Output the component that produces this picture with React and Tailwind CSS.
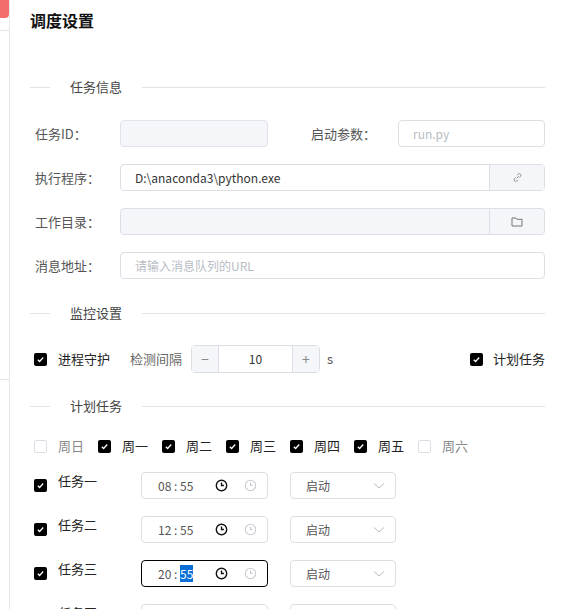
import React from "react";

const font = { fontFamily: '"Noto Sans CJK SC", "Liberation Sans", sans-serif' };

const Check = ({ on }) =>
  on ? (
    <span className="w-[13px] h-[13px] rounded-[2px] bg-black flex items-center justify-center shrink-0">
      <svg width="9" height="9" viewBox="0 0 10 10"><path d="M2 5.2l2 2 4-4.4" stroke="#fff" strokeWidth="1.4" fill="none" /></svg>
    </span>
  ) : (
    <span className="w-[13px] h-[13px] rounded-[2px] border border-[#dcdfe6] bg-white shrink-0" />
  );

const Divider = ({ title }) => (
  <div className="flex items-center h-[20px]">
    <div className="w-[20px] h-px bg-[#e1e3e8]" />
    <span className="px-5 text-[13px] text-[#444]">{title}</span>
    <div className="flex-1 h-px bg-[#e1e3e8]" />
  </div>
);

const Label = ({ children }) => <span className="w-[90px] pl-[5px] text-[13px] text-[#555] shrink-0">{children}</span>;

const Clock = ({ c, w }) => (
  <svg width="13" height="13" viewBox="0 0 14 14"><circle cx="7" cy="7" r="5.6" stroke={c} strokeWidth={w} fill="none" /><path d="M7 3.8V7h2.6" stroke={c} strokeWidth={w} fill="none" /></svg>
);

const Task = ({ name, time, focus }) => {
  const [h, m] = time.split(":");
  return (
    <div className="flex items-center h-[27px]">
      <span className="w-[28px] pl-[4px]"><Check on /></span>
      <span className="w-[83px] text-[13px] text-[#222] -mt-[10px]">{name}</span>
      <div className={`w-[127px] h-[27px] rounded flex items-center pl-[16px] pr-[10px] ${focus ? "border border-black" : "border border-[#dcdfe6]"}`}>
        <span className="text-[12px] text-[#555] flex-1">{h} : {focus ? <span className="bg-[#0a6fd6] text-white">{m}</span> : m}</span>
        <span className="mr-[16px]"><Clock c="#111" w="1.5" /></span>
        <Clock c="#c8cbd2" w="1.2" />
      </div>
      <div className="ml-[22px] w-[106px] h-[27px] rounded border border-[#dcdfe6] flex items-center pl-[15px] pr-[10px]">
        <span className="text-[12px] text-[#555] flex-1">启动</span>
        <svg width="12" height="8" viewBox="0 0 12 8"><path d="M1 1.5l5 4.5 5-4.5" stroke="#bbb" fill="none" /></svg>
      </div>
    </div>
  );
};

export default function App() {
  const days = [["周日", 0], ["周一", 1], ["周二", 1], ["周三", 1], ["周四", 1], ["周五", 1], ["周六", 0]];
  return (
    <div className="flex h-[609px] overflow-hidden bg-white" style={font}>
      <div className="w-[10px] border-r border-[#e5e6ea] shrink-0 flex flex-col">
        <div className="h-[18px] bg-[#f56c6c] rounded-br" />
        <div className="h-[12px]" />
        <div className="h-[350px] border-t border-b border-[#e5e6ea]" />
      </div>
      <div className="flex-1 pl-[20px] pr-[20px]">
        <h1 className="text-[16px] font-bold text-[#111] mt-[8px] h-[24px]">调度设置</h1>
        <div className="mt-[45px]"><Divider title="任务信息" /></div>
        <div className="mt-[23px] flex items-center h-[27px]">
          <Label>任务ID：</Label>
          <div className="w-[148px] h-[27px] rounded border border-[#e1e3e8] bg-[#f5f6f9]" />
          <span className="ml-[43px] w-[87px] text-[13px] text-[#555]">启动参数：</span>
          <div className="flex-1 h-[27px] rounded border border-[#dcdfe6] flex items-center px-[14px] text-[12px] text-[#b8bcc4]">run.py</div>
        </div>
        <div className="mt-[17px] flex items-center h-[27px]">
          <Label>执行程序：</Label>
          <div className="flex-1 h-[27px] rounded border border-[#dcdfe6] flex">
            <span className="flex-1 flex items-center px-[14px] text-[12px] text-[#333]">D:\anaconda3\python.exe</span>
            <span className="w-[55px] border-l border-[#dcdfe6] bg-[#f5f6f9] flex items-center justify-center">
              <svg width="11" height="11" viewBox="0 0 12 12"><path d="M5 7l2.5-2.5M4 6L2.6 7.4a1.8 1.8 0 002.5 2.5L6.5 8.5M8 6l1.4-1.4a1.8 1.8 0 00-2.5-2.5L5.5 3.5" stroke="#888" fill="none" /></svg>
            </span>
          </div>
        </div>
        <div className="mt-[17px] flex items-center h-[27px]">
          <Label>工作目录：</Label>
          <div className="flex-1 h-[27px] rounded border border-[#dcdfe6] bg-[#f5f6f9] flex">
            <span className="flex-1" />
            <span className="w-[55px] border-l border-[#dcdfe6] flex items-center justify-center">
              <svg width="12" height="10" viewBox="0 0 12 10"><path d="M1 1h4l1 1.3h5V9H1z" stroke="#777" fill="none" /></svg>
            </span>
          </div>
        </div>
        <div className="mt-[17px] flex items-center h-[27px]">
          <Label>消息地址：</Label>
          <div className="flex-1 h-[27px] rounded border border-[#dcdfe6] flex items-center px-[14px] text-[12px] text-[#b8bcc4]">请输入消息队列的URL</div>
        </div>
        <div className="mt-[24px]"><Divider title="监控设置" /></div>
        <div className="mt-[22px] flex items-center h-[28px]">
          <span className="pl-[4px] w-[28px]"><Check on /></span>
          <span className="text-[13px] text-[#222] w-[72px]">进程守护</span>
          <span className="text-[13px] text-[#666] w-[61px]">检测间隔</span>
          <div className="w-[129px] h-[28px] rounded border border-[#dcdfe6] flex">
            <span className="w-[27px] bg-[#f5f6f9] border-r border-[#dcdfe6] flex items-center justify-center text-[#888] text-[14px]">−</span>
            <span className="flex-1 flex items-center justify-center text-[12px] text-[#333]">10</span>
            <span className="w-[27px] bg-[#f5f6f9] border-l border-[#dcdfe6] flex items-center justify-center text-[#888] text-[14px]">+</span>
          </div>
          <span className="ml-[7px] text-[13px] text-[#555]">s</span>
          <span className="flex-1" />
          <Check on />
          <span className="ml-[10px] text-[13px] text-[#222]">计划任务</span>
        </div>
        <div className="mt-[23px]"><Divider title="计划任务" /></div>
        <div className="mt-[20px] flex items-center h-[20px]">
          {days.map(([d, on]) => (
            <div key={d} className="w-[64px] flex items-center pl-[4px]">
              <Check on={on} />
              <span className={`ml-[11px] text-[13px] ${on ? "text-[#222]" : "text-[#888]"}`}>{d}</span>
            </div>
          ))}
        </div>
        <div className="mt-[16px] flex flex-col gap-[17px]">
          <Task name="任务一" time="08:55" />
          <Task name="任务二" time="12:55" />
          <Task name="任务三" time="20:55" focus />
          <Task name="任务四" time="00:00" />
        </div>
      </div>
    </div>
  );
}
